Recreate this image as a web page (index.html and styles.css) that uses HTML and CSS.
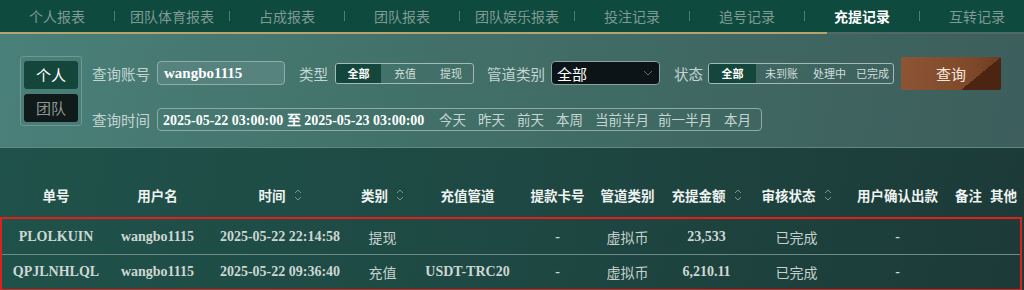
FILE: index.html
```html
<!DOCTYPE html>
<html lang="zh-CN">
<head>
    <meta charset="UTF-8">
    <meta name="viewport" content="width=device-width, initial-scale=1.0">
    <title>充提记录</title>
    <link rel="stylesheet" href="styles.css">
</head>
<body>
    <div class="tabs">
        <span class="tab">个人报表</span><span class="sep"></span>
        <span class="tab">团队体育报表</span><span class="sep"></span>
        <span class="tab">占成报表</span><span class="sep"></span>
        <span class="tab">团队报表</span><span class="sep"></span>
        <span class="tab">团队娱乐报表</span><span class="sep"></span>
        <span class="tab">投注记录</span><span class="sep"></span>
        <span class="tab">追号记录</span><span class="sep"></span>
        <span class="tab active">充提记录</span><span class="sep"></span>
        <span class="tab">互转记录</span>
    </div>
    <div class="tab-line"></div>

    <div class="panel">
        <div class="scope">
            <div class="scope-btn on">个人</div>
            <div class="scope-btn">团队</div>
        </div>
        <div class="fields">
            <div class="row">
                <span class="label">查询账号</span>
                <div class="input">wangbo1115</div>
                <span class="label type-label">类型</span>
                <div class="seg">
                    <span class="seg-item on w45">全部</span>
                    <span class="seg-item w48">充值</span>
                    <span class="seg-item w44">提现</span>
                </div>
                <span class="label pipe-label">管道类别</span>
                <div class="select">
                    <span>全部</span>
                    <svg width="10" height="6" viewBox="0 0 10 6"><path d="M1 1l4 4 4-4" fill="none" stroke="#5d6b6b" stroke-width="1"/></svg>
                </div>
                <span class="label state-label">状态</span>
                <div class="seg">
                    <span class="seg-item on w47">全部</span>
                    <span class="seg-item w51">未到账</span>
                    <span class="seg-item w45">处理中</span>
                    <span class="seg-item w41">已完成</span>
                </div>
                <button class="search">查询</button>
            </div>
            <div class="row">
                <span class="label">查询时间</span>
                <div class="range">
                    <div class="range-text">2025-05-22 03:00:00 至 2025-05-23 03:00:00</div>
                    <span class="quick">今天</span>
                    <span class="quick">昨天</span>
                    <span class="quick">前天</span>
                    <span class="quick">本周</span>
                    <span class="quick">当前半月</span>
                    <span class="quick">前一半月</span>
                    <span class="quick">本月</span>
                </div>
            </div>
        </div>
    </div>

    <div class="table">
        <div class="grid head">
            <div>单号</div>
            <div>用户名</div>
            <div>时间<svg class="sort" width="8" height="14" viewBox="0 0 8 14"><path d="M1 5l3-3 3 3M1 9l3 3 3-3" fill="none" stroke="#7e9490" stroke-width="1"/></svg></div>
            <div>类别<svg class="sort" width="8" height="14" viewBox="0 0 8 14"><path d="M1 5l3-3 3 3M1 9l3 3 3-3" fill="none" stroke="#7e9490" stroke-width="1"/></svg></div>
            <div>充值管道</div>
            <div>提款卡号</div>
            <div>管道类别</div>
            <div>充提金额<svg class="sort" width="8" height="14" viewBox="0 0 8 14"><path d="M1 5l3-3 3 3M1 9l3 3 3-3" fill="none" stroke="#7e9490" stroke-width="1"/></svg></div>
            <div>审核状态<svg class="sort" width="8" height="14" viewBox="0 0 8 14"><path d="M1 5l3-3 3 3M1 9l3 3 3-3" fill="none" stroke="#7e9490" stroke-width="1"/></svg></div>
            <div>用户确认出款</div>
            <div>备注</div>
            <div>其他</div>
        </div>
        <div class="rows">
            <div class="grid row-data">
                <div class="num">PLOLKUIN</div>
                <div class="num">wangbo1115</div>
                <div class="num">2025-05-22 22:14:58</div>
                <div class="cn">提现</div>
                <div class="num"></div>
                <div class="num">-</div>
                <div class="cn">虚拟币</div>
                <div class="num">23,533</div>
                <div class="cn">已完成</div>
                <div class="num">-</div>
                <div></div>
                <div></div>
            </div>
            <div class="grid row-data">
                <div class="num">QPJLNHLQL</div>
                <div class="num">wangbo1115</div>
                <div class="num">2025-05-22 09:36:40</div>
                <div class="cn">充值</div>
                <div class="num">USDT-TRC20</div>
                <div class="num">-</div>
                <div class="cn">虚拟币</div>
                <div class="num">6,210.11</div>
                <div class="cn">已完成</div>
                <div class="num">-</div>
                <div></div>
                <div></div>
            </div>
        </div>
    </div>
</body>
</html>
```

FILE: styles.css
```css
body {
    margin: 0;
    width: 1024px;
    height: 290px;
    overflow: hidden;
    font-family: "Noto Sans CJK SC", "Noto Sans", sans-serif;
    background: #1d3d3a;
}
.tabs {
    display: flex;
    align-items: center;
    height: 32px;
    background: #0e4a3e;
    white-space: nowrap;
    overflow: hidden;
}
.tab {
    flex: 0 0 114px;
    text-align: center;
    font-size: 14px;
    color: #7f9b94;
    line-height: 32px;
}
.tab.active {
    color: #ffffff;
    font-weight: bold;
}
.sep {
    flex: 0 0 1px;
    height: 10px;
    background: #557a72;
}
.tab-line {
    height: 2px;
    background: linear-gradient(to right, #b8a36c 0, #b8a36c 827px, #4f6967 827px);
}
.panel {
    display: flex;
    align-items: flex-start;
    height: 114px;
    box-sizing: border-box;
    padding: 22px 0 0 20px;
    background: linear-gradient(100deg, #4a807a 0%, #427169 40%, #3d5e5c 100%);
    border-bottom: 1px solid #628682;
}
.scope {
    width: 62px;
    height: 70px;
    box-sizing: border-box;
    border: 1px solid #6f9893;
    border-radius: 3px;
    padding: 4px 3px;
    display: flex;
    flex-direction: column;
    gap: 5px;
}
.scope-btn {
    height: 28px;
    line-height: 28px;
    text-align: center;
    font-size: 15px;
    color: #8b9896;
    background: #111a1a;
    border-radius: 3px;
}
.scope-btn.on {
    color: #ffffff;
    background: #15463c;
}
.fields {
    display: flex;
    flex-direction: column;
    gap: 22px;
    padding-top: 5px;
    margin-left: 10px;
}
.row {
    display: flex;
    align-items: center;
    height: 24px;
}
.label {
    font-size: 14.5px;
    color: #c3d5d1;
    margin-right: 7px;
    white-space: nowrap;
}
.type-label { margin-left: 14px; }
.pipe-label { margin-left: 13px; margin-right: 6px; }
.state-label { margin-left: 14px; margin-right: 5px; }
.input {
    width: 128px;
    height: 24px;
    box-sizing: border-box;
    border: 1px solid #8eaca8;
    border-radius: 4px;
    background: #56837d;
    padding-left: 6px;
    font-family: "Liberation Serif", serif;
    font-weight: bold;
    font-size: 15px;
    line-height: 22px;
    color: #ffffff;
}
.seg {
    display: flex;
    height: 21px;
    box-sizing: border-box;
    border: 1px solid #a3bbb8;
    border-radius: 3px;
    overflow: hidden;
}
.seg-item {
    font-size: 11px;
    color: #d2dedb;
    text-align: center;
    line-height: 19px;
}
.seg-item.on {
    background: #14463c;
    color: #ffffff;
    font-weight: bold;
}
.w41 { width: 41px; }
.w44 { width: 44px; }
.w45 { width: 45px; }
.w47 { width: 47px; }
.w48 { width: 48px; }
.w51 { width: 51px; }
.select {
    width: 109px;
    height: 24px;
    box-sizing: border-box;
    border: 1px solid #8aa4a1;
    border-radius: 4px;
    background: #0d1417;
    display: flex;
    align-items: center;
    justify-content: space-between;
    padding: 0 6px 0 5px;
    font-size: 15px;
    color: #ffffff;
}
.search {
    margin-left: 7px;
    width: 100px;
    height: 33px;
    border: none;
    border-radius: 2px;
    font-family: "Noto Sans CJK SC", sans-serif;
    font-size: 15px;
    color: #f4e8de;
    background:
        linear-gradient(to bottom right, transparent 50%, #4b2512 50%) right top / 40px 33px no-repeat,
        linear-gradient(100deg, #8d5534 0%, #7e482a 70%, #6a3920 100%);
}
.range {
    display: flex;
    align-items: center;
    width: 605px;
    height: 23px;
    box-sizing: border-box;
    border: 1px solid #8eaaa6;
    border-radius: 4px;
    padding-left: 5px;
}
.range-text {
    flex: 0 0 264px;
    overflow: hidden;
    white-space: nowrap;
    font-family: "Liberation Serif", serif;
    font-weight: bold;
    font-size: 14px;
    color: #ffffff;
    margin-right: 12px;
}
.quick {
    flex: 0 0 auto;
    font-size: 13.5px;
    color: #c5d6d2;
    margin-right: 12px;
    white-space: nowrap;
}
.quick:nth-child(6) { margin-right: 9px; }
.table {
    height: 141px;
    padding-top: 24px;
    box-sizing: border-box;
    background: linear-gradient(100deg, #1f524a 0%, #1e4843 50%, #1c3a38 100%);
}
.grid {
    display: grid;
    grid-template-columns: 108px 95px 150px 55px 115px 65px 75px 83px 97px 105px 37px 33px;
    align-items: center;
}
.grid > div {
    display: flex;
    align-items: center;
    justify-content: center;
    white-space: nowrap;
}
.head {
    height: 45px;
    padding: 0 2px;
    font-size: 13.5px;
    font-weight: bold;
    color: #eef3f1;
}
.sort {
    margin-left: 8px;
}
.rows {
    width: 1022px;
    box-sizing: border-box;
    border: 2px solid #e0201c;
}
.row-data {
    height: 35px;
}
.row-data + .row-data {
    border-top: 1px solid #6c8a86;
    height: 34px;
}
.num {
    font-family: "Liberation Serif", serif;
    font-weight: bold;
    font-size: 14px;
    color: #cdd7d3;
}
.cn {
    font-size: 14px;
    color: #c6d1cd;
}
```
